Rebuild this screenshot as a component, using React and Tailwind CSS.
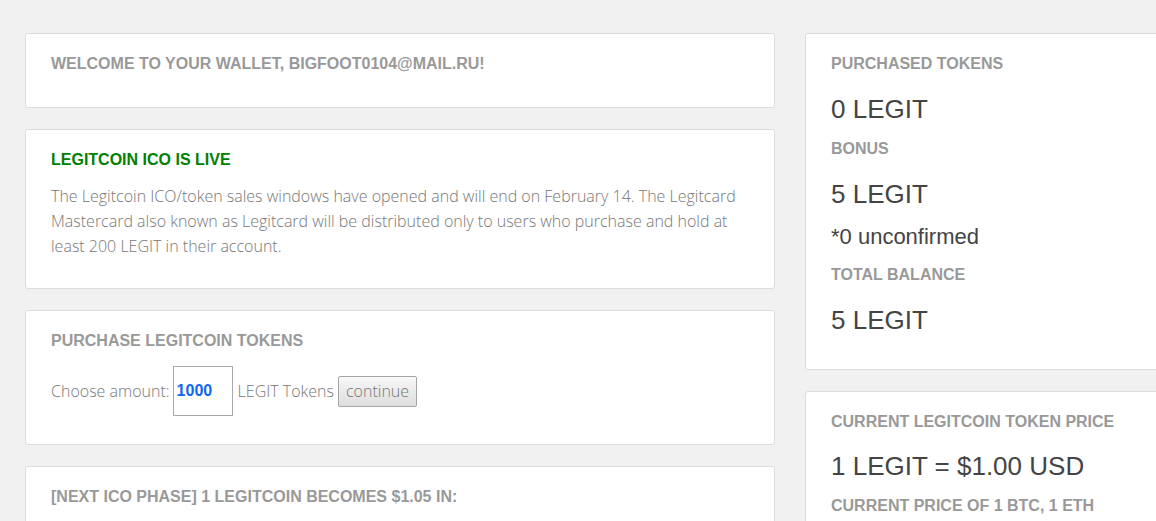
const heading = "font-['Liberation_Sans',Arial,sans-serif] font-bold text-[16px] leading-[20px] uppercase text-[#999]"
const value = "font-['Liberation_Sans',Arial,sans-serif] text-[26px] leading-[30px] text-[#444]"

function Card({ className = '', children }) {
  return (
    <div className={`bg-white border border-[#dcdcdc] rounded-[3px] px-[25px] pt-[20px] ${className}`}>
      {children}
    </div>
  )
}

export default function App() {
  return (
    <div className="min-h-screen w-full bg-[#f1f1f1] overflow-hidden">
      <div className="flex items-start gap-[30px] pl-[25px] pt-[33px] w-[1200px]">

        {/* Left column */}
        <div className="w-[750px] shrink-0 flex flex-col gap-[21px]">
          <Card className="pb-[33px]">
            <h2 className={heading}>Welcome to your wallet, bigfoot0104@mail.ru!</h2>
          </Card>

          <Card className="pb-[29px]">
            <h2 className={`${heading} !text-[#008000] mb-[14px]`}>Legitcoin ICO is live</h2>
            <p className="font-['Open_Sans',sans-serif] font-light text-[16px] leading-[25px] text-[#777]">
              The Legitcoin ICO/token sales windows have opened and will end on February 14. The Legitcard
              Mastercard also known as Legitcard will be distributed only to users who purchase and hold at
              least 200 LEGIT in their account.
            </p>
          </Card>

          <Card className="pb-[28px]">
            <h2 className={`${heading} mb-[15px]`}>Purchase Legitcoin tokens</h2>
            <div className="flex items-center font-['Open_Sans',sans-serif] font-light text-[16px] text-[#777]">
              <span>Choose amount:</span>
              <input
                defaultValue="1000"
                className="ml-[3px] w-[60px] h-[50px] border border-[#aaa] px-[3px] font-['Liberation_Sans',Arial,sans-serif] font-bold text-[16px] text-[#1166ee] outline-none"
              />
              <span className="ml-[5px]">LEGIT Tokens</span>
              <button className="ml-[4px] h-[31px] px-[7px] border border-[#a5a5a5] rounded-[2px] bg-gradient-to-b from-[#f8f8f8] to-[#dedede] font-['Open_Sans',sans-serif] font-light text-[16px] text-[#777]">
                continue
              </button>
            </div>
          </Card>

          <Card className="pb-[40px]">
            <h2 className={heading}>[Next ICO phase] 1 Legitcoin becomes $1.05 in:</h2>
          </Card>
        </div>

        {/* Right column */}
        <div className="w-[380px] shrink-0 flex flex-col gap-[21px]">
          <Card className="pb-[34px]">
            <h2 className={`${heading} mb-[20px]`}>Purchased tokens</h2>
            <div className={`${value} mb-[15px]`}>0 LEGIT</div>
            <h2 className={`${heading} mb-[20px]`}>Bonus</h2>
            <div className={`${value} mb-[15px]`}>5 LEGIT</div>
            <div className="font-['Liberation_Sans',Arial,sans-serif] text-[22px] leading-[26px] text-[#444] mb-[15px]">*0 unconfirmed</div>
            <h2 className={`${heading} mb-[20px]`}>Total balance</h2>
            <div className={value}>5 LEGIT</div>
          </Card>

          <Card className="pb-[40px]">
            <h2 className={`${heading} mb-[19px]`}>Current Legitcoin token price</h2>
            <div className={`${value} mb-[15px]`}>1 LEGIT = $1.00 USD</div>
            <h2 className={heading}>Current price of 1 BTC, 1 ETH</h2>
          </Card>
        </div>

      </div>
    </div>
  )
}
